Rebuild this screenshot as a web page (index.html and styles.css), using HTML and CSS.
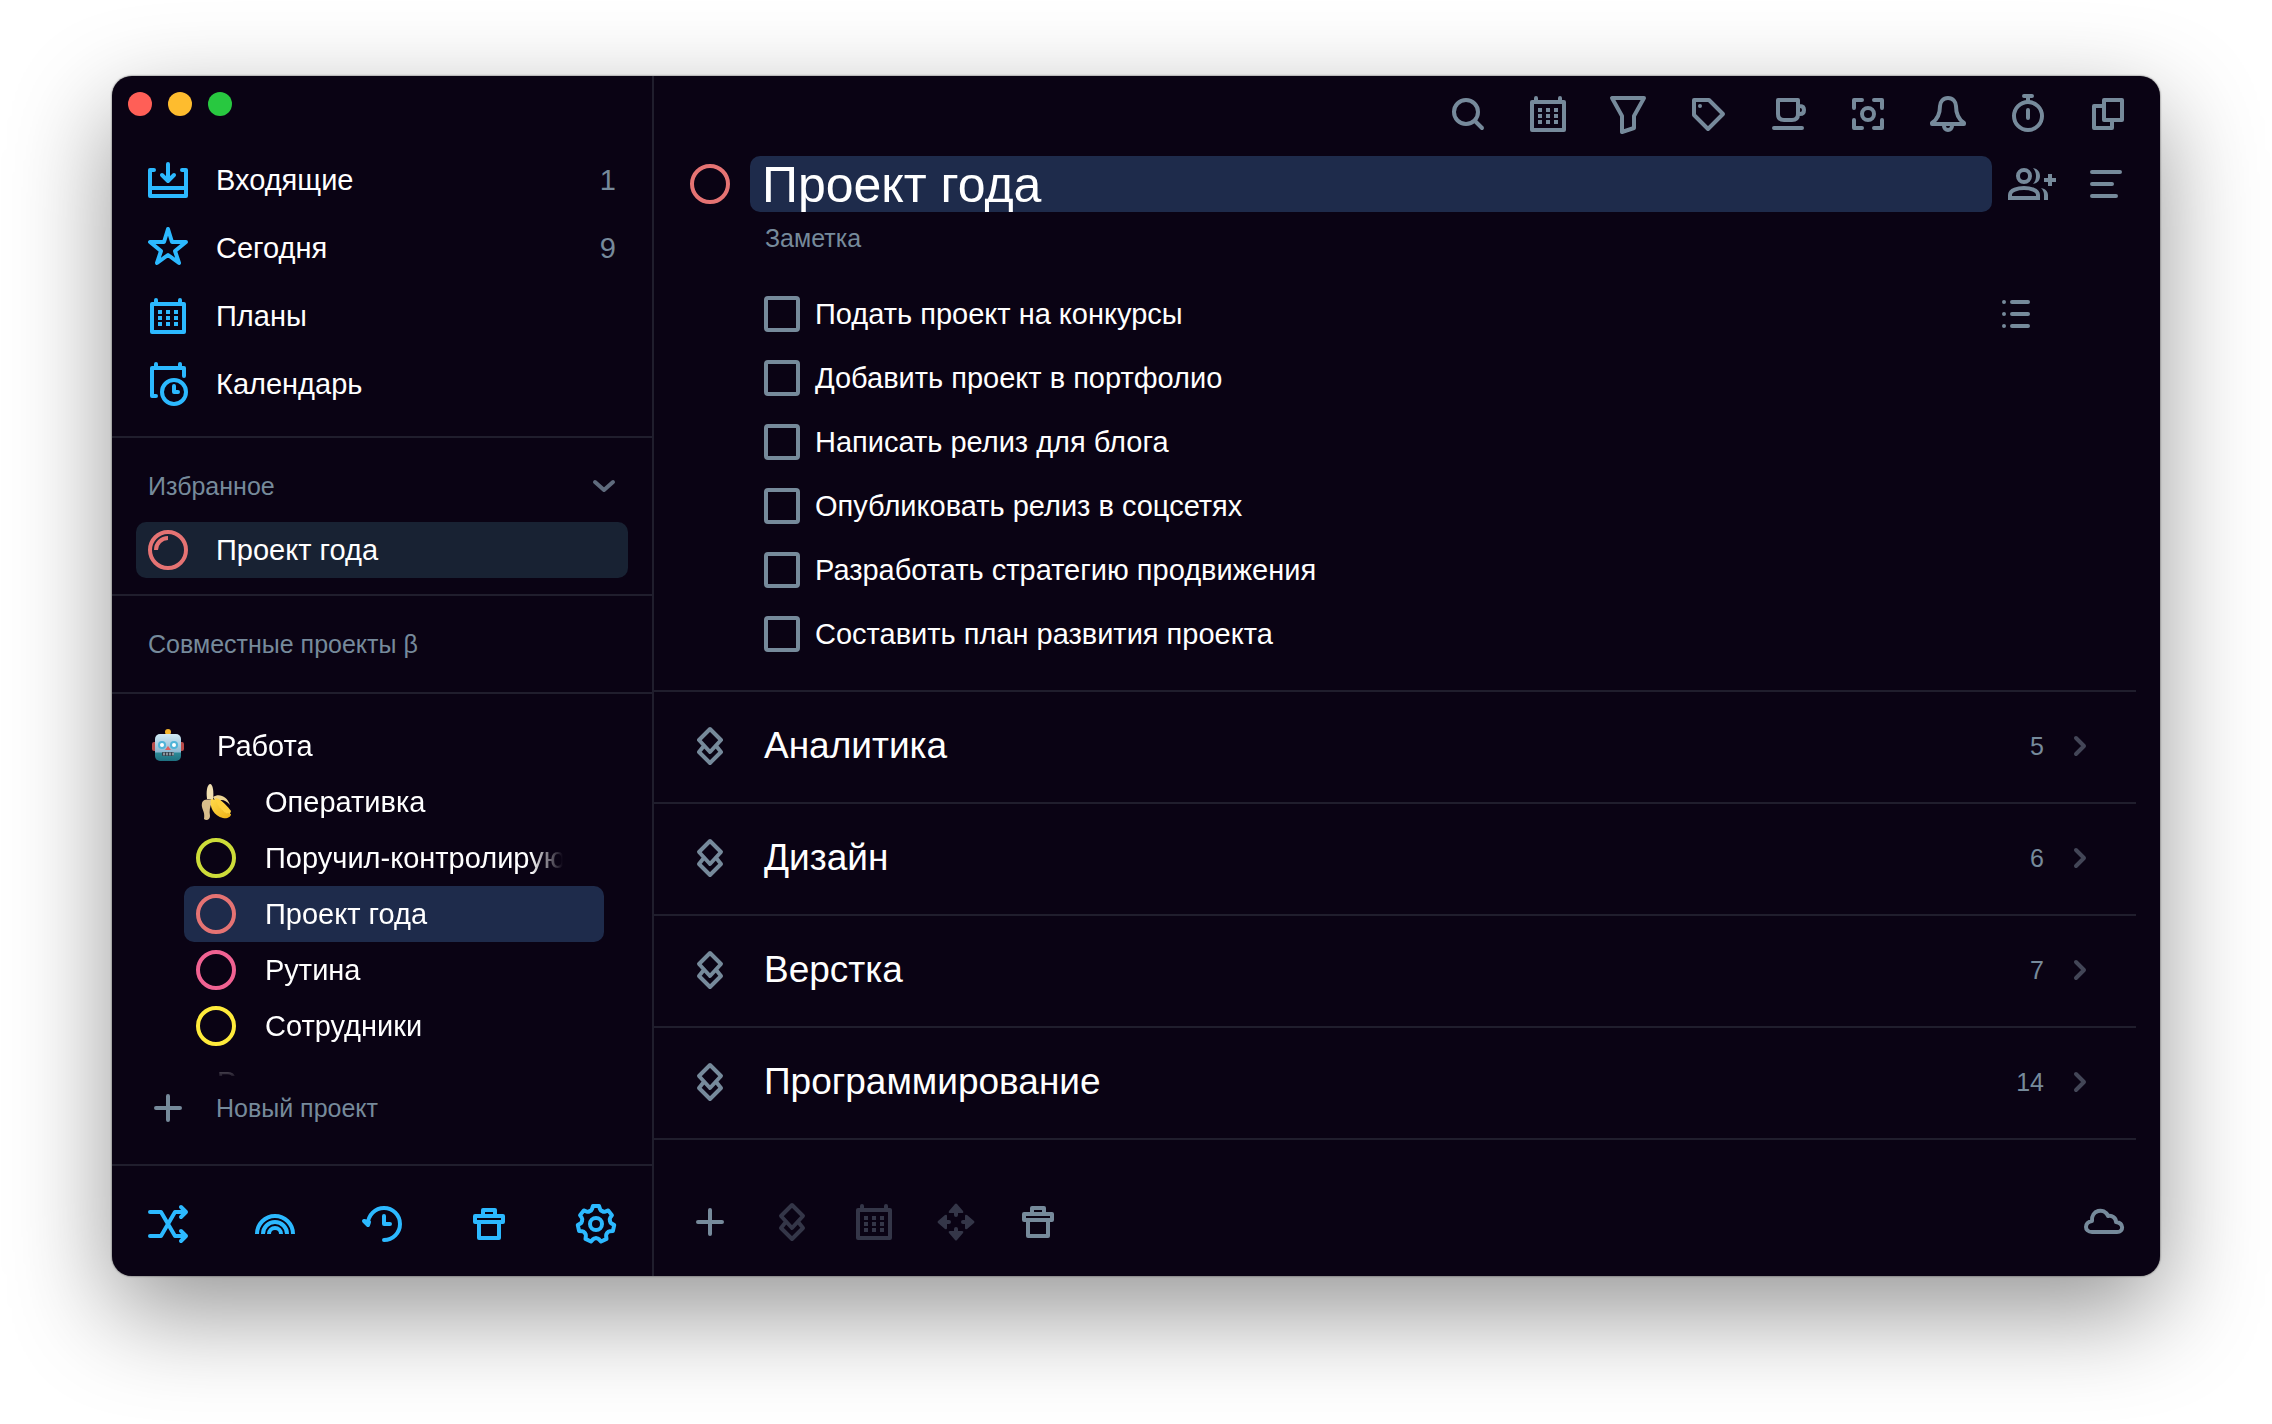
FILE: index.html
```html
<!DOCTYPE html>
<html lang="ru">
<head>
<meta charset="utf-8">
<meta name="viewport" content="width=device-width, initial-scale=1">
<title>Проект года</title>
<link rel="stylesheet" href="styles.css">
</head>
<body>
<svg class="sprite" aria-hidden="true">
  <symbol id="inbox" viewBox="0 0 48 48"><path d="M10 14H6V40H42V14H38M6 32H42M24 8V24M18 19L24 25L30 19"/></symbol>
  <symbol id="star" viewBox="0 0 48 48"><path d="M24 5L28 18H42L31 27L35 39L24 31L13 39L17 27L6 18H20Z"/></symbol>
  <symbol id="plans" viewBox="0 0 48 48"><path d="M8 12H40V40H8ZM12 8V12M36 8V12"/><path class="solid" d="M14 18h4v4h-4zM22 18h4v4h-4zM30 18h4v4h-4zM14 24h4v4h-4zM22 24h4v4h-4zM30 24h4v4h-4zM14 30h4v4h-4zM22 30h4v4h-4zM30 30h4v4h-4z"/></symbol>
  <symbol id="calendar" viewBox="0 0 48 50"><path d="M12 37H8V9H40V17M12 5V9M36 5V9M30 27V33H34"/><circle cx="30" cy="33" r="12"/></symbol>
  <symbol id="ring" viewBox="0 0 48 48"><circle cx="24" cy="24" r="18"/></symbol>
  <symbol id="ring-progress" viewBox="0 0 48 48"><circle cx="24" cy="24" r="18"/><path class="butt" d="M12 24A12 12 0 0 1 24 12"/></symbol>
  <symbol id="plus" viewBox="0 0 48 48"><path d="M24 12V36M12 24H36"/></symbol>
  <symbol id="chevron-down" viewBox="0 0 48 48"><path d="M15 20L24 28L33 20"/></symbol>
  <symbol id="chevron-right" viewBox="0 0 48 48"><path d="M20 16L28 24L20 32"/></symbol>
  <symbol id="shuffle" viewBox="0 0 48 48"><path d="M6 12H17L31 36H42M6 36H17L31 12H42M37 7L42 12L37 17M37 31L42 36L37 41"/></symbol>
  <symbol id="rainbow" viewBox="0 0 48 48"><path class="butt" d="M6 34A18 18 0 0 1 42 34M12 34A12 12 0 0 1 36 34M18 34A6 6 0 0 1 30 34"/></symbol>
  <symbol id="history" viewBox="0 0 48 48"><path d="M10 24A16 16 0 1 1 26 40M26 16V24H32M6 21L10 25L11 22Z"/></symbol>
  <symbol id="trash" viewBox="0 0 48 48"><path d="M10 16H38V22H10ZM14 22V38H34V22M18 16V10H30V16"/></symbol>
  <symbol id="gear" viewBox="0 0 48 48"><circle cx="24" cy="24" r="6"/>
    <g transform="translate(24 24)">
      <path id="tooth" d="M-6 -13Q-4.500 -13.500 -4 -15L-3 -18H3L4 -15Q4.500 -13.500 6 -13"/>
      <use href="#tooth" transform="rotate(51.430)"/><use href="#tooth" transform="rotate(102.860)"/><use href="#tooth" transform="rotate(154.290)"/><use href="#tooth" transform="rotate(205.710)"/><use href="#tooth" transform="rotate(257.140)"/><use href="#tooth" transform="rotate(308.570)"/>
    </g></symbol>
  <symbol id="search" viewBox="0 0 48 48"><circle cx="22" cy="22" r="12"/><path d="M31 31L38 38"/></symbol>
  <symbol id="filter" viewBox="0 0 48 48"><path d="M8 8H40L30 26V38L18 42V26Z"/></symbol>
  <symbol id="tag" viewBox="0 0 48 48"><path d="M10 10H25L39 24L24 39L10 25Z"/><circle class="solid" cx="16" cy="16" r="2"/></symbol>
  <symbol id="cup" viewBox="0 0 48 48"><path d="M14 10H34V24Q34 30 28 30H20Q14 30 14 24ZM34 16H36Q40 16 40 20T36 24H34M10 38H38"/></symbol>
  <symbol id="focus" viewBox="0 0 48 48"><circle cx="24" cy="24" r="6"/><path d="M10 18V10H18M30 10H38V18M38 30V38H30M18 38H10V30"/></symbol>
  <symbol id="bell" viewBox="0 0 48 48"><path d="M24 8C19 8 16 12 16 16C16 24 14 29 8 33V34H40V33C34 29 32 24 32 16C32 12 29 8 24 8ZM20 36A4 4 0 0 0 28 36"/></symbol>
  <symbol id="timer" viewBox="0 0 48 48"><circle cx="24" cy="26" r="14"/><path d="M20 6H28M24 6V12M24 20V28"/></symbol>
  <symbol id="windows" viewBox="0 0 48 48"><path d="M20 10H38V30H20ZM20 16H10V38H28V31"/></symbol>
  <symbol id="add-user" viewBox="0 0 48 48"><circle cx="16" cy="16" r="6"/><path class="butt" d="M2 38V35C2 30 10 28 16 28S30 30 30 35V38ZM42 14V26M36 20H48"/><path class="solid" d="M25 8C30 9 32 12 32 16S30 23 25 24C27 22 28 19 28 16S27 10 25 8ZM33 28C38 29 40 32 40 35V40H36V35C36 32 35 30 33 28Z"/></symbol>
  <symbol id="menu" viewBox="0 0 48 48"><path d="M10 12H38M10 24H30M10 36H34"/></symbol>
  <symbol id="list" viewBox="0 0 48 48"><path d="M20 12H36M20 24H36M20 36H36M12 12H12M12 24H12M12 36H12"/></symbol>
  <symbol id="section" viewBox="0 0 48 48"><path d="M24 7L35 18L24 30L13 18ZM17 25L13 30L24 41L35 30L31 25"/></symbol>
  <symbol id="move" viewBox="0 0 48 48"><g class="solid"><path id="arrow" d="M23 6Q24 5 25 6L31 13Q32 15 30 15H26V17A2 2 0 0 1 22 17V15H18Q16 15 17 13Z"/><use href="#arrow" transform="rotate(90 24 24)"/><use href="#arrow" transform="rotate(180 24 24)"/><use href="#arrow" transform="rotate(270 24 24)"/></g></symbol>
  <symbol id="cloud" viewBox="0 0 48 48"><path d="M12 34H37C44 34 44 25 36 24C36 20 32 17 28 18C24 9 11 12 12 23C4 24 4 34 12 34Z"/></symbol>
  <linearGradient id="face" x1="0" y1="0" x2="0" y2="1"><stop offset="0" stop-color="#cfe9f5"/><stop offset=".65" stop-color="#8fb9d2"/><stop offset=".72" stop-color="#2b8794"/><stop offset="1" stop-color="#1f7080"/></linearGradient>
  <linearGradient id="peel" x1="0" y1="0" x2="1" y2="1"><stop offset="0" stop-color="#ffd94a"/><stop offset="1" stop-color="#eeb216"/></linearGradient>
</svg>

<div class="window">
  <aside class="sidebar">
    <div class="lights">
      <button class="light light-close" aria-label="Закрыть"></button>
      <button class="light light-min" aria-label="Свернуть"></button>
      <button class="light light-max" aria-label="Развернуть"></button>
    </div>

    <nav class="nav">
      <a class="nav-row" href="#inbox"><svg class="icon"><use href="#inbox"/></svg><span>Входящие</span><span class="nav-count">1</span></a>
      <a class="nav-row" href="#today"><svg class="icon"><use href="#star"/></svg><span>Сегодня</span><span class="nav-count">9</span></a>
      <a class="nav-row" href="#plans"><svg class="icon"><use href="#plans"/></svg><span>Планы</span></a>
      <a class="nav-row" href="#calendar"><svg class="icon icon-tall"><use href="#calendar"/></svg><span>Календарь</span></a>
    </nav>

    <section class="favorites">
      <div class="group-head">
        <h2 class="group-title">Избранное</h2>
        <button class="icon-button chevron-down" aria-label="Свернуть избранное"><svg class="icon"><use href="#chevron-down"/></svg></button>
      </div>
      <a class="project favorite" href="#project"><svg class="icon red"><use href="#ring-progress"/></svg><span>Проект года</span></a>
    </section>

    <section class="shared"><h2 class="group-title">Совместные проекты β</h2></section>

    <div class="tree">
      <a class="project root" href="#work">
        <svg class="icon emoji" viewBox="0 0 48 48">
          <circle cx="24" cy="10" r="3" fill="#f5b52e"/>
          <rect x="8" y="20" width="5" height="9" rx="2" fill="#b94a48"/><rect x="35" y="20" width="5" height="9" rx="2" fill="#b94a48"/>
          <rect x="11" y="12" width="26" height="27" rx="5" fill="url(#face)"/>
          <circle cx="18" cy="23" r="4" fill="#4fb4d8"/><circle cx="30" cy="23" r="4" fill="#4fb4d8"/>
          <circle cx="18" cy="23" r="2" fill="#fff"/><circle cx="30" cy="23" r="2" fill="#fff"/>
          <path d="M24 24L27 28H21Z" fill="#e0605e"/>
          <rect x="18" y="30" width="12" height="4" rx="1" fill="#35404c"/>
          <path d="M20 31V33M23 31V33M26 31V33M29 31V33" stroke="#dfe8ec" stroke-width="1"/>
        </svg><span>Работа</span></a>
      <a class="project child" href="#ops">
        <svg class="icon emoji" viewBox="0 0 48 48">
          <path d="M15 21C14 13 15 7 18 6C21 6 22 14 21 22Z" fill="#f0dfb0"/>
          <path d="M19 22C12 20 9 23 10 29C11 33 13 35 12 41C14 43 18 42 18 38C17 33 18 28 20 25Z" fill="#d9bd8c"/>
          <path d="M21 19C27 15 35 18 38 27C33 21 28 21 24 24Z" fill="#ecd594"/>
          <path d="M19 21C17 29 22 38 31 40C35 41 39 39 39 36C34 36 27 31 25 22Z" fill="url(#peel)"/>
          <path d="M23 20C27 20 32 24 39 33L38 36C32 36 26 30 23 20Z" fill="#ffd23e"/>
        </svg><span>Оперативка</span></a>
      <a class="project child" href="#delegated"><svg class="icon lime"><use href="#ring"/></svg><span class="project-name">Поручил-контролирую</span></a>
      <a class="project child selected" href="#project"><svg class="icon red"><use href="#ring"/></svg><span>Проект года</span></a>
      <a class="project child" href="#routine"><svg class="icon pink"><use href="#ring"/></svg><span>Рутина</span></a>
      <a class="project child" href="#staff"><svg class="icon yellow"><use href="#ring"/></svg><span>Сотрудники</span></a>
      <a class="project root" href="#misc"><svg class="icon emoji" viewBox="0 0 48 48"><path d="M8 21C14 17 20 18 24 19C29 18 34 19 39 20C38 30 32 38 24 38S10 32 8 21Z" fill="#e0c050"/></svg><span>Разное</span></a>
    </div>

    <button class="new-project"><svg class="icon"><use href="#plus"/></svg><span>Новый проект</span></button>

    <footer class="sidebar-foot">
      <button class="icon-button" aria-label="Перемешать"><svg class="icon"><use href="#shuffle"/></svg></button>
      <button class="icon-button" aria-label="Радуга"><svg class="icon"><use href="#rainbow"/></svg></button>
      <button class="icon-button" aria-label="История"><svg class="icon"><use href="#history"/></svg></button>
      <button class="icon-button" aria-label="Корзина"><svg class="icon"><use href="#trash"/></svg></button>
      <button class="icon-button" aria-label="Настройки"><svg class="icon"><use href="#gear"/></svg></button>
    </footer>
  </aside>

  <main class="main">
    <div class="toolbar">
      <button class="icon-button" aria-label="Поиск"><svg class="icon"><use href="#search"/></svg></button>
      <button class="icon-button" aria-label="Дата"><svg class="icon"><use href="#plans"/></svg></button>
      <button class="icon-button" aria-label="Фильтр"><svg class="icon"><use href="#filter"/></svg></button>
      <button class="icon-button" aria-label="Метки"><svg class="icon"><use href="#tag"/></svg></button>
      <button class="icon-button" aria-label="Перерыв"><svg class="icon"><use href="#cup"/></svg></button>
      <button class="icon-button" aria-label="Фокус"><svg class="icon"><use href="#focus"/></svg></button>
      <button class="icon-button" aria-label="Уведомления"><svg class="icon"><use href="#bell"/></svg></button>
      <button class="icon-button" aria-label="Таймер"><svg class="icon"><use href="#timer"/></svg></button>
      <button class="icon-button" aria-label="Новое окно"><svg class="icon"><use href="#windows"/></svg></button>
    </div>

    <header class="title-row">
      <svg class="icon red"><use href="#ring"/></svg>
      <input class="title" type="text" value="Проект года" aria-label="Название проекта">
      <button class="icon-button" aria-label="Добавить участника"><svg class="icon"><use href="#add-user"/></svg></button>
      <button class="icon-button menu-button" aria-label="Меню"><svg class="icon"><use href="#menu"/></svg></button>
    </header>
    <input class="note" type="text" placeholder="Заметка" aria-label="Заметка">

    <div class="checklist">
      <div class="checks">
        <label class="check"><input type="checkbox"><span>Подать проект на конкурсы</span></label>
        <label class="check"><input type="checkbox"><span>Добавить проект в портфолио</span></label>
        <label class="check"><input type="checkbox"><span>Написать релиз для блога</span></label>
        <label class="check"><input type="checkbox"><span>Опубликовать релиз в соцсетях</span></label>
        <label class="check"><input type="checkbox"><span>Разработать стратегию продвижения</span></label>
        <label class="check"><input type="checkbox"><span>Составить план развития проекта</span></label>
      </div>
      <button class="icon-button list-button" aria-label="Чек-лист"><svg class="icon"><use href="#list"/></svg></button>
    </div>

    <div class="sections">
      <a class="section" href="#analytics"><svg class="icon"><use href="#section"/></svg><span class="section-name">Аналитика</span><span class="section-count">5</span><svg class="icon dim"><use href="#chevron-right"/></svg></a>
      <a class="section" href="#design"><svg class="icon"><use href="#section"/></svg><span class="section-name">Дизайн</span><span class="section-count">6</span><svg class="icon dim"><use href="#chevron-right"/></svg></a>
      <a class="section" href="#markup"><svg class="icon"><use href="#section"/></svg><span class="section-name">Верстка</span><span class="section-count">7</span><svg class="icon dim"><use href="#chevron-right"/></svg></a>
      <a class="section" href="#code"><svg class="icon"><use href="#section"/></svg><span class="section-name">Программирование</span><span class="section-count">14</span><svg class="icon dim"><use href="#chevron-right"/></svg></a>
    </div>

    <footer class="main-foot">
      <button class="icon-button" aria-label="Добавить"><svg class="icon"><use href="#plus"/></svg></button>
      <button class="icon-button" aria-label="Раздел" disabled><svg class="icon"><use href="#section"/></svg></button>
      <button class="icon-button" aria-label="Дата" disabled><svg class="icon"><use href="#plans"/></svg></button>
      <button class="icon-button" aria-label="Переместить" disabled><svg class="icon"><use href="#move"/></svg></button>
      <button class="icon-button" aria-label="Удалить"><svg class="icon"><use href="#trash"/></svg></button>
      <button class="icon-button cloud" aria-label="Синхронизация"><svg class="icon"><use href="#cloud"/></svg></button>
    </footer>
  </main>
</div>
</body>
</html>
```

FILE: styles.css
```css
:root {
  --bg: #0a0314;
  --line: #201e2d;
  --muted: #768a9b;
  --disabled: #343648;
  --blue: #2cb9ff;
  --text: #fff;
}

* { box-sizing: border-box; }

body {
  margin: 0;
  min-height: 100vh;
  padding: 76px 112px 148px;
  background: #fff;
  color: var(--text);
  font: 29px/40px "Liberation Sans", Arial, sans-serif;
  display: flex;
}

a { color: inherit; text-decoration: none; }

button, input {
  margin: 0;
  padding: 0;
  border: 0;
  background: none;
  color: inherit;
  font: inherit;
}

.sprite { position: absolute; width: 0; height: 0; }

.icon {
  display: block;
  flex: none;
  width: 48px;
  height: 48px;
  fill: none;
  stroke: currentColor;
  stroke-width: 4;
  stroke-linecap: round;
  stroke-linejoin: round;
}
.icon-tall { height: 50px; }
.emoji { stroke: none; }
.solid { fill: currentColor; stroke: none; }
.butt { stroke-linecap: butt; stroke-linejoin: miter; }

.icon-button { display: block; flex: none; }
.icon-button:disabled { color: var(--disabled); }

.red { color: #e57373; }
.lime { color: #cddc39; }
.pink { color: #f06292; }
.yellow { color: #ffeb3b; }
.dim { color: #434657; }

.window {
  flex: 1;
  display: flex;
  background: var(--bg);
  border-radius: 20px;
  overflow: hidden;
  box-shadow: 0 0 2px rgba(0, 0, 0, .7), 0 36px 100px rgba(0, 0, 0, .42);
}

/* Sidebar */
.sidebar {
  flex: none;
  width: 542px;
  border-right: 2px solid var(--line);
  display: flex;
  flex-direction: column;
}

.lights { display: flex; gap: 16px; padding: 16px 16px 30px; }
.light { width: 24px; height: 24px; border-radius: 50%; }
.light-close { background: #ff5f57; }
.light-min { background: #febc2e; }
.light-max { background: #28c840; }

.nav { padding-bottom: 18px; border-bottom: 2px solid var(--line); }
.nav-row {
  display: flex;
  align-items: center;
  gap: 24px;
  height: 68px;
  padding: 0 36px 0 32px;
}
.nav-row .icon { color: var(--blue); }
.nav-count { margin-left: auto; color: var(--muted); }

.favorites { padding: 24px 24px 16px; border-bottom: 2px solid var(--line); }
.group-head {
  display: flex;
  align-items: center;
  justify-content: space-between;
  margin-bottom: 12px;
  padding-left: 12px;
}
.group-title { margin: 0; color: var(--muted); font-size: 25px; font-weight: 400; }
.chevron-down { color: #5f6b7d; }

.project {
  display: flex;
  align-items: center;
  gap: 24px;
  height: 56px;
  padding: 0 8px;
  border-radius: 10px;
}
.favorite { background: #182233; }

.shared { padding: 28px 36px; border-bottom: 2px solid var(--line); }

.tree {
  flex: 1 1 0;
  min-height: 0;
  overflow: hidden;
  padding: 24px 48px 0 24px;
  -webkit-mask-image: linear-gradient(to top, rgba(0, 0, 0, .1), rgba(0, 0, 0, .3) 6px, #000 28px);
  mask-image: linear-gradient(to top, rgba(0, 0, 0, .1), rgba(0, 0, 0, .3) 6px, #000 28px);
}
.tree .project { gap: 25px; }
.child { margin-left: 48px; }
.selected { background: #1e2b4b; }
.project-name {
  width: 298px;
  overflow: hidden;
  white-space: nowrap;
  -webkit-mask-image: linear-gradient(to left, transparent, #000 32px);
  mask-image: linear-gradient(to left, transparent, #000 32px);
}

.new-project {
  display: flex;
  align-items: center;
  gap: 24px;
  height: 90px;
  padding: 0 32px 24px;
  border-bottom: 2px solid var(--line);
  color: var(--muted);
  font-size: 25px;
}

.sidebar-foot {
  display: flex;
  justify-content: space-between;
  padding: 34px 32px 28px;
  color: var(--blue);
}

/* Main pane */
.main {
  flex: 1;
  min-width: 0;
  display: flex;
  flex-direction: column;
  color: var(--muted);
}

.toolbar {
  display: flex;
  justify-content: flex-end;
  gap: 32px;
  padding: 14px 28px 18px;
}

.title-row {
  display: flex;
  align-items: center;
  gap: 16px;
  padding: 0 30px 0 32px;
}
.title {
  flex: 1;
  min-width: 0;
  height: 56px;
  padding: 2px 12px 0;
  border-radius: 10px;
  background: #1e2b4b;
  color: var(--text);
  font-size: 50px;
}
.menu-button { margin-left: 10px; }

.note {
  height: 52px;
  margin: 0 168px 0 111px;
  font-size: 25px;
}
.note::placeholder { color: var(--muted); opacity: 1; }

.checklist {
  display: flex;
  align-items: flex-start;
  justify-content: space-between;
  margin-right: 24px;
  padding: 18px 96px 24px 110px;
  border-bottom: 2px solid var(--line);
}
.check {
  display: flex;
  align-items: center;
  gap: 15px;
  height: 64px;
  color: var(--text);
}
.check input {
  appearance: none;
  width: 36px;
  height: 36px;
  border: 4px solid var(--muted);
  border-radius: 4px;
}
.list-button { margin-top: 8px; }

.sections { margin-right: 24px; }
.section {
  display: flex;
  align-items: center;
  height: 112px;
  padding: 0 32px 2px;
  border-bottom: 2px solid var(--line);
}
.section-name { flex: 1; padding-left: 30px; color: var(--text); font-size: 37px; }
.section-count { padding-right: 12px; font-size: 25px; }

.main-foot {
  display: flex;
  gap: 34px;
  margin-top: auto;
  padding: 0 32px 30px;
}
.cloud { margin-left: auto; }
```
